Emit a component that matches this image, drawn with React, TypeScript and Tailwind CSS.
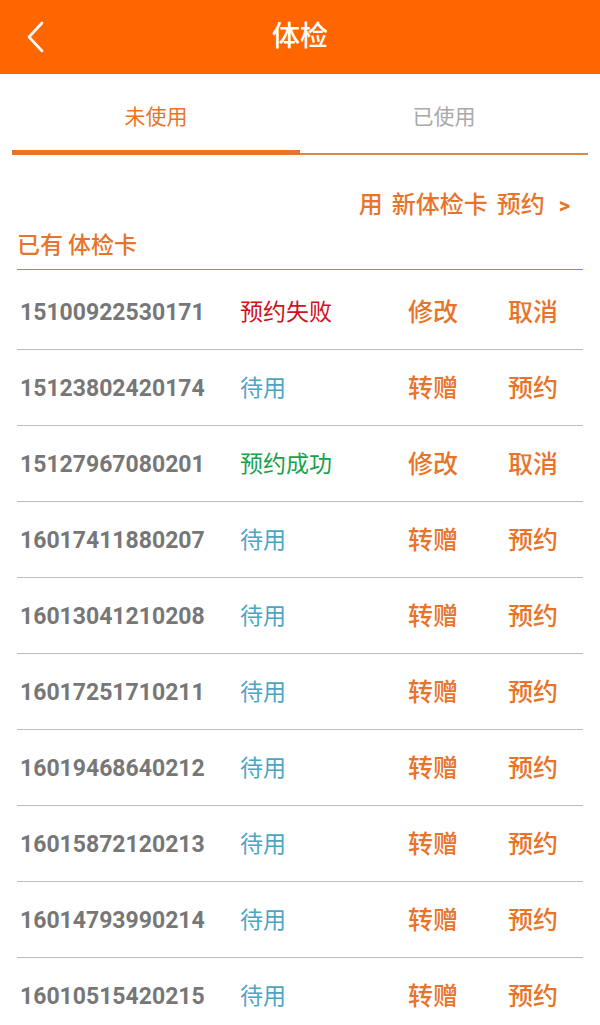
import React from "react";

type Row = { no: string; status: string; kind: "fail" | "wait" | "ok" };

const rows: Row[] = [
  { no: "15100922530171", status: "预约失败", kind: "fail" },
  { no: "15123802420174", status: "待用", kind: "wait" },
  { no: "15127967080201", status: "预约成功", kind: "ok" },
  { no: "16017411880207", status: "待用", kind: "wait" },
  { no: "16013041210208", status: "待用", kind: "wait" },
  { no: "16017251710211", status: "待用", kind: "wait" },
  { no: "16019468640212", status: "待用", kind: "wait" },
  { no: "16015872120213", status: "待用", kind: "wait" },
  { no: "16014793990214", status: "待用", kind: "wait" },
  { no: "16010515420215", status: "待用", kind: "wait" },
];

const font = { fontFamily: "Roboto, 'Noto Sans CJK SC', sans-serif" };

export default function App() {
  return (
    <div className="w-[600px] h-[1025px] overflow-hidden bg-white" style={font}>
      {/* Header */}
      <div className="relative h-[74px] bg-[#ff6600] flex items-center justify-center">
        <div className="absolute left-[25px] top-[21px]">
          <svg width="20" height="32" viewBox="0 0 20 32" fill="none">
            <path d="M17 2 L4 16 L17 30" stroke="#fff" strokeWidth="2.6" strokeLinecap="round" strokeLinejoin="round" />
          </svg>
        </div>
        <span className="text-white text-[28px] leading-none font-medium">体检</span>
      </div>

      {/* Tabs */}
      <div className="flex px-[12px]">
        <div className="flex-1 h-[81px] border-b-[5px] border-[#e8742a] flex items-center justify-center pt-[12px]">
          <span className="text-[21px] text-[#e8742a]">未使用</span>
        </div>
        <div className="flex-1 h-[81px] border-b-2 border-[#da8a40] flex items-center justify-center pt-[9px]">
          <span className="text-[21px] text-[#a9a9a9]">已使用</span>
        </div>
      </div>

      {/* Links */}
      <div className="px-[17px]">
        <div className="pb-[8px] border-b border-[#e8742a]">
          <div className="mt-[35px] h-[30px] flex items-center justify-end pr-[13px] text-[24px] text-[#e8742a] font-medium">
            <span>用</span>
            <span className="ml-[9px]">新体检卡</span>
            <span className="ml-[9px]">预约</span>
            <span className="ml-[14px] font-bold text-[22px]">&gt;</span>
          </div>
          <div className="mt-[11px] h-[30px] flex items-center text-[23px] text-[#e8742a] font-medium">
            <span>已有</span>
            <span className="ml-[5px]">体检卡</span>
          </div>
        </div>

        {/* List */}
        <div className="mt-[4px]">
          {rows.map((r) => (
            <div key={r.no} className="h-[76px] border-b border-[#bdbdbd] flex items-center pl-[3px]">
              <span className="w-[220px] text-[23px] font-bold text-[#777777] pt-[4px]">{r.no}</span>
              <span
                className={
                  "w-[168px] text-[23px] pt-[3px] " +
                  (r.kind === "fail"
                    ? "text-[#d0111b]"
                    : r.kind === "ok"
                    ? "text-[#17a34a]"
                    : "text-[#4ba6c3]")
                }
              >
                {r.status}
              </span>
              <span className="w-[100px] text-[25px] text-[#e8742a] font-medium pt-[2px]">{r.kind === "wait" ? "转赠" : "修改"}</span>
              <span className="text-[25px] text-[#e8742a] font-medium pt-[2px]">{r.kind === "wait" ? "预约" : "取消"}</span>
            </div>
          ))}
        </div>
      </div>
    </div>
  );
}
